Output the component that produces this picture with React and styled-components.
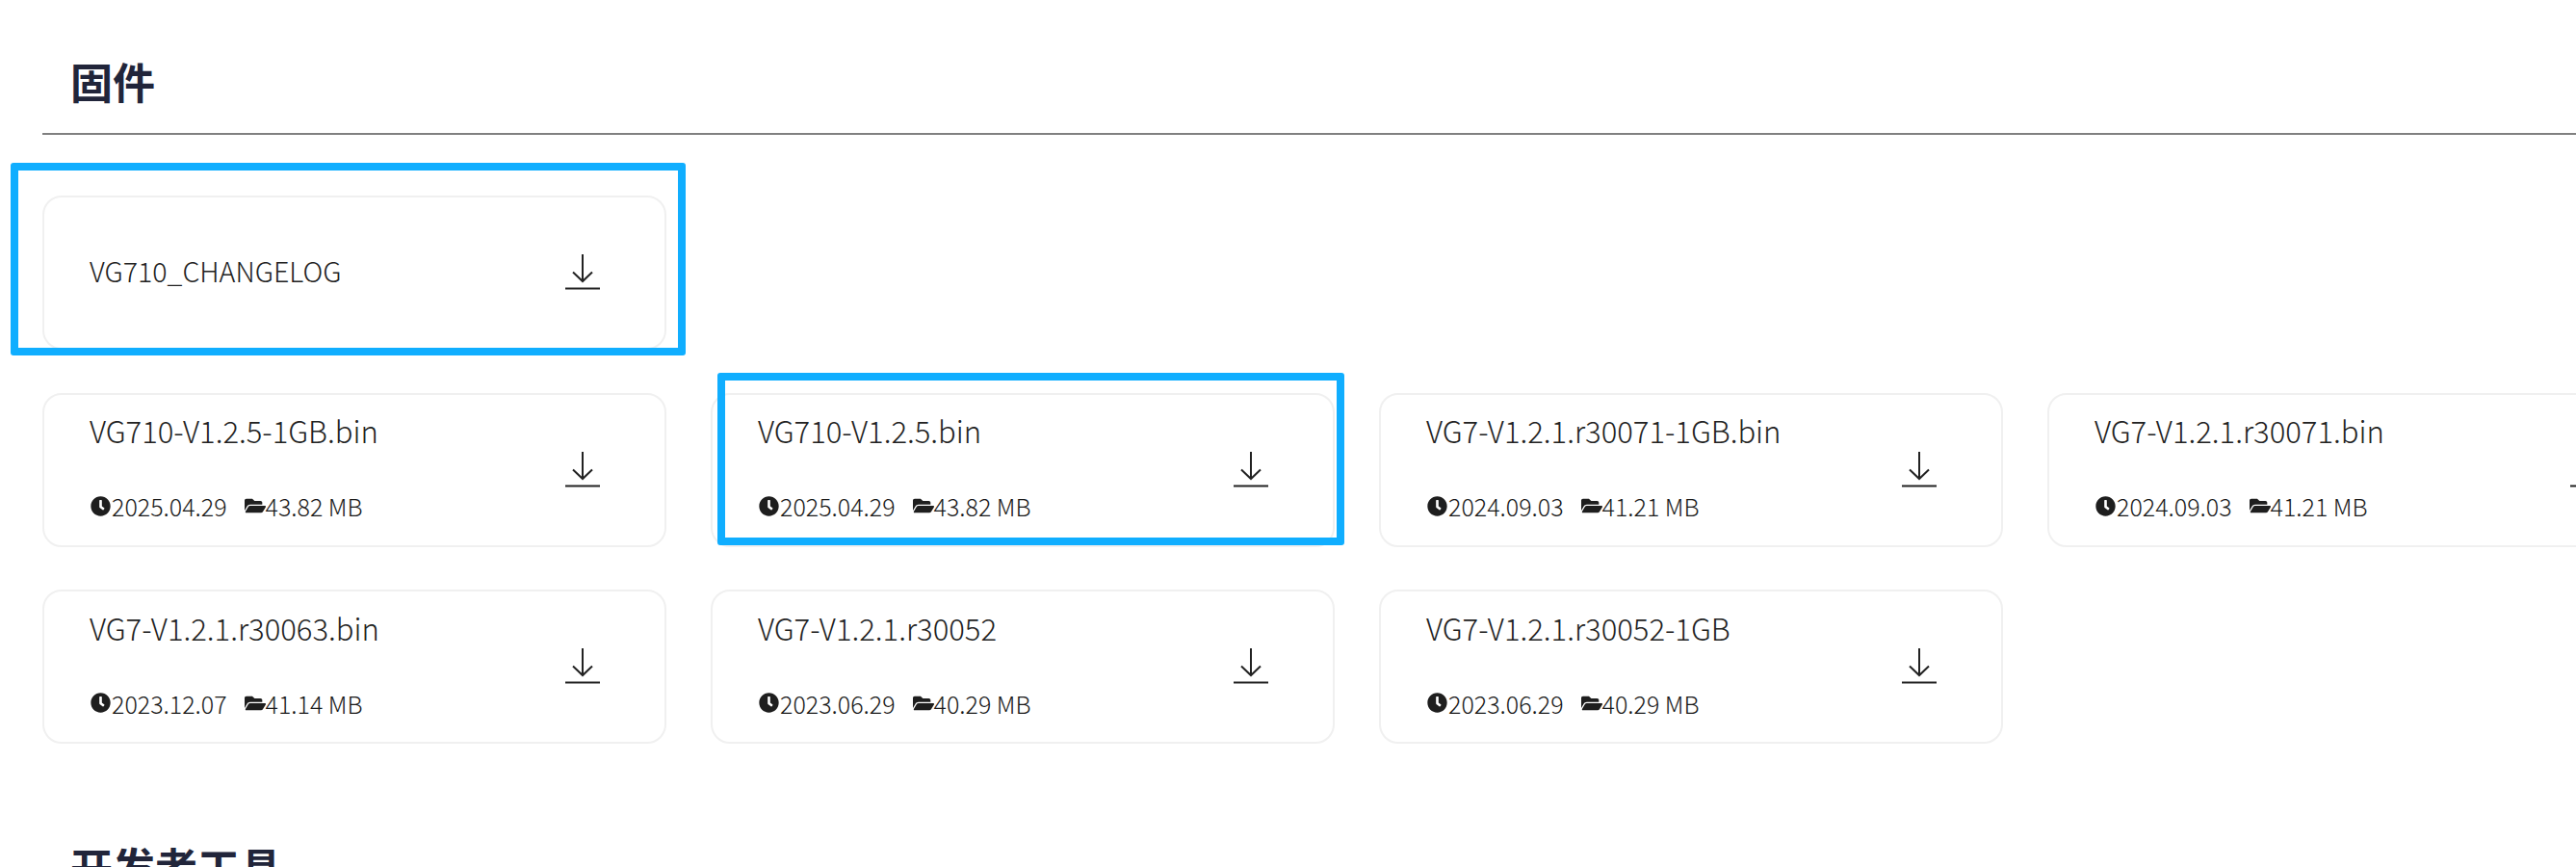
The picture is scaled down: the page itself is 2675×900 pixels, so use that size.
import React from 'react';
import styled, { createGlobalStyle } from 'styled-components';
import { FaClock, FaFolderOpen } from 'react-icons/fa';

const GlobalStyle = createGlobalStyle`
  html, body {
    margin: 0;
    padding: 0;
    background: #fff;
    overflow: hidden;
  }
  body {
    font-family: 'Noto Sans CJK SC', 'Noto Sans', sans-serif;
  }
`;

const Page = styled.div`
  position: relative;
  width: 2675px;
  height: 900px;
  overflow: hidden;
  padding-left: 44px;
  box-sizing: border-box;
`;

const SectionHeader = styled.div`
  height: 140px;
  box-sizing: border-box;
  border-bottom: 2px solid #808080;
  display: flex;
  align-items: flex-end;
`;

const SectionTitle = styled.h2`
  margin: 0;
  padding: 0 0 22px 29px;
  font-size: 44px;
  line-height: 64px;
  font-weight: 700;
  color: #21253a;
`;

const FileGrid = styled.div`
  display: grid;
  grid-template-columns: repeat(4, 648px);
  grid-auto-rows: 160px;
  column-gap: 46px;
  row-gap: 44.5px;
  margin-top: 63px;
  width: 2800px;
`;

const Card = styled.div`
  box-sizing: border-box;
  border: 2px solid #f0f0f0;
  border-radius: 20px;
  padding: 0 67px 0 47px;
  display: flex;
  align-items: center;
  justify-content: space-between;
  background: #fff;
`;

const CardBody = styled.div`
  display: flex;
  flex-direction: column;
  gap: 38px;
  margin-top: ${p => (p.$single ? -4 : -7)}px;
`;

const FileName = styled.div`
  font-size: ${p => (p.$single ? 28.6 : 31)}px;
  line-height: 44px;
  font-weight: 300;
  color: #222;
`;

const Meta = styled.div`
  display: flex;
  align-items: center;
  font-size: 25px;
  line-height: 36px;
  font-weight: 300;
  color: #1a1a1a;
`;

const MetaItem = styled.span`
  display: inline-flex;
  align-items: center;
  margin-right: 18px;
  svg {
    color: #1e1e1e;
    flex: none;
  }
`;

const ClockIcon = styled(FaClock)`
  font-size: 21px;
  margin: 0 1px;
`;

const FolderIcon = styled(FaFolderOpen)`
  font-size: 22px;
`;

const Section = styled.div`
  margin-top: 95px;
`;

const Highlight = styled.div`
  position: absolute;
  left: ${p => p.$x}px;
  top: ${p => p.$y}px;
  width: ${p => p.$w}px;
  height: ${p => p.$h}px;
  box-sizing: border-box;
  border: 8px solid #10aeff;
  border-radius: 3px;
`;

const DownloadIcon = () => (
  <svg width="36" height="38" viewBox="0 0 36 38" fill="none" stroke="#222" strokeWidth="2">
    <path d="M18 0v27.5" />
    <path d="M8 18.5l10 9.5 10-9.5" />
    <path d="M0 35.5h36" />
  </svg>
);

const FILES = [
  { name: 'VG710_CHANGELOG' },
  null,
  null,
  null,
  { name: 'VG710-V1.2.5-1GB.bin', date: '2025.04.29', size: '43.82 MB' },
  { name: 'VG710-V1.2.5.bin', date: '2025.04.29', size: '43.82 MB' },
  { name: 'VG7-V1.2.1.r30071-1GB.bin', date: '2024.09.03', size: '41.21 MB' },
  { name: 'VG7-V1.2.1.r30071.bin', date: '2024.09.03', size: '41.21 MB' },
  { name: 'VG7-V1.2.1.r30063.bin', date: '2023.12.07', size: '41.14 MB' },
  { name: 'VG7-V1.2.1.r30052', date: '2023.06.29', size: '40.29 MB' },
  { name: 'VG7-V1.2.1.r30052-1GB', date: '2023.06.29', size: '40.29 MB' },
];

const fileCard = (f, i) => {
  if (!f) return <div key={i} />;
  return (
    <Card key={f.name}>
      <CardBody $single={!f.date}>
        <FileName $single={!f.date}>{f.name}</FileName>
        {f.date ? (
          <Meta>
            <MetaItem>
              <ClockIcon />
              {f.date}
            </MetaItem>
            <MetaItem>
              <FolderIcon />
              {f.size}
            </MetaItem>
          </Meta>
        ) : null}
      </CardBody>
      <DownloadIcon />
    </Card>
  );
};

export default function App() {
  return (
    <Page>
      <GlobalStyle />
      <SectionHeader>
        <SectionTitle>固件</SectionTitle>
      </SectionHeader>
      <FileGrid>{FILES.map(fileCard)}</FileGrid>
      <Section>
        <SectionTitle>开发者工具</SectionTitle>
      </Section>
      <Highlight $x={11} $y={169} $w={701} $h={200} />
      <Highlight $x={745} $y={387} $w={651} $h={179} />
    </Page>
  );
}
